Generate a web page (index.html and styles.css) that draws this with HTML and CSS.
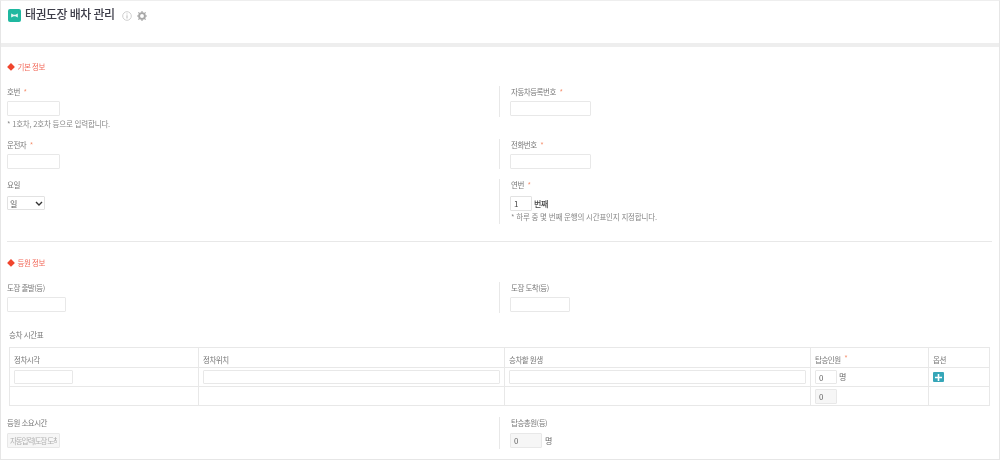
FILE: index.html
```html
<!DOCTYPE html>
<html lang="ko">
<head>
<meta charset="utf-8">
<title>태권도장 배차 관리</title>
<link rel="stylesheet" href="styles.css">
</head>
<body>
<div class="page">
  <header class="head">
    <span class="logo"><svg width="7" height="5" viewBox="0 0 8 6"><path d="M0 0.5 L3 2 H5 L8 0.5 V5.5 L5 4 H3 L0 5.5 Z" fill="#e6f7f3"/></svg></span>
    <h1 class="title">태권도장 배차 관리</h1>
    <svg class="ico-info" width="10" height="10" viewBox="0 0 10 10"><circle cx="5" cy="5" r="4.3" fill="none" stroke="#cfcfcf"/><path d="M5 2.5v.9M5 4.3v3.2" stroke="#bbb" fill="none"/></svg>
    <svg class="ico-gear" width="10" height="10" viewBox="0 0 10 10"><circle cx="5" cy="5" r="2.9" fill="none" stroke="#a8a8a8" stroke-width="1.9"/><path d="M5 0v2M5 8v2M0 5h2M8 5h2M1.4 1.4l1.4 1.4M7.2 7.2l1.4 1.4M1.4 8.6l1.4-1.4M7.2 2.8l1.4-1.4" stroke="#a8a8a8" stroke-width="1.2"/></svg>
  </header>
  <div class="band"></div>

  <main class="content">
    <h2 class="sec sec-a"><span class="dia">◆</span> 기본 정보</h2>

    <div class="row row-1">
      <div class="cell">
        <label class="lab">호번 <i class="req">*</i></label>
        <input class="in w53">
        <p class="hint">* 1호차, 2호차 등으로 입력합니다.</p>
      </div>
      <div class="cell right">
        <label class="lab">자동차등록번호 <i class="req">*</i></label>
        <input class="in w81">
      </div>
    </div>

    <div class="row row-2">
      <div class="cell">
        <label class="lab">운전자 <i class="req">*</i></label>
        <input class="in w53">
      </div>
      <div class="cell right">
        <label class="lab">전화번호 <i class="req">*</i></label>
        <input class="in w81">
      </div>
    </div>

    <div class="row row-3">
      <div class="cell">
        <label class="lab">요일</label>
        <span class="sel">일<svg width="8" height="5" viewBox="0 0 8 5"><path d="M1 1l3 3 3-3" fill="none" stroke="#333" stroke-width="1.4"/></svg></span>
      </div>
      <div class="cell right">
        <label class="lab">연번 <i class="req">*</i></label>
        <div class="inline"><input class="in w22 dark" value="1"><b class="unit">번째</b></div>
        <p class="hint tight">* 하루 중 몇 번째 운행의 시간표인지 지정합니다.</p>
      </div>
    </div>

    <hr class="rule">

    <h2 class="sec sec-b"><span class="dia">◆</span> 등원 정보</h2>

    <div class="row row-4">
      <div class="cell">
        <label class="lab">도장 출발(등)</label>
        <input class="in w59">
      </div>
      <div class="cell right">
        <label class="lab">도장 도착(등)</label>
        <input class="in w60">
      </div>
    </div>

    <h3 class="tbl-title">승차 시간표</h3>

    <table class="tbl">
      <colgroup><col class="c1"><col class="c2"><col class="c3"><col class="c4"><col class="c5"></colgroup>
      <thead>
        <tr><th>정차시각</th><th>정차위치</th><th>승차할 원생</th><th>탑승인원 <i class="req up">*</i></th><th>옵션</th></tr>
      </thead>
      <tbody>
        <tr class="r1">
          <td><input class="in w59"></td>
          <td><input class="in full"></td>
          <td><input class="in full"></td>
          <td><div class="inline"><input class="in w22" value="0"><span class="unit plain">명</span></div></td>
          <td><span class="plus"><svg width="7" height="7" viewBox="0 0 7 7"><path d="M3.5 0v7M0 3.5h7" stroke="#fff" stroke-width="1.6"/></svg></span></td>
        </tr>
        <tr class="r2">
          <td></td><td></td><td></td>
          <td><input class="in w22 ro" value="0" readonly></td>
          <td></td>
        </tr>
      </tbody>
    </table>

    <div class="row row-5">
      <div class="cell">
        <label class="lab">등원 소요시간</label>
        <input class="in w53 ro ph" placeholder="자동입력(도장 도착시간 기준)" readonly>
      </div>
      <div class="cell right">
        <label class="lab">탑승총원(등)</label>
        <div class="inline"><input class="in w32 ro" value="0" readonly><span class="unit plain wide">명</span></div>
      </div>
    </div>
  </main>
</div>
</body>
</html>
```

FILE: styles.css
```css
* { box-sizing: border-box; }
html, body { margin: 0; padding: 0; background: #fff; }
body {
  width: 1000px;
  height: 460px;
  overflow: hidden;
  font-family: "Noto Sans CJK KR", "Noto Sans", sans-serif;
  color: #666;
}
.page {
  width: 1000px;
  height: 460px;
  border: 1px solid #e6e6e6;
  border-top-color: #eee;
  overflow: hidden;
  filter: blur(0.4px);
}
.head {
  height: 42px;
  display: flex;
  align-items: flex-start;
  padding: 6px 0 0 7px;
}
.logo {
  width: 13px;
  height: 13px;
  margin-top: 2px;
  border-radius: 2px;
  background: #1fb8a0;
  display: flex;
  align-items: center;
  justify-content: center;
}
.title {
  margin: 0 0 0 4px;
  font-size: 12px;
  line-height: 14px;
  font-weight: 500;
  color: #3e3e4a;
  letter-spacing: -0.55px;
  white-space: nowrap;
}
.ico-info { margin: 4px 0 0 7px; }
.ico-gear { margin: 4px 0 0 5px; }
.band { height: 4px; background: #eeeeee; }
.content { padding: 0 6px; }

.sec {
  margin: 0;
  font-size: 7.5px;
  line-height: 10px;
  font-weight: 400;
  color: #f2695a;
  letter-spacing: -0.5px;
}
.sec-a { padding-top: 15px; }
.sec-b { padding-top: 16px; }
.dia { color: #f0452d; font-size: 8px; letter-spacing: 0; margin-right: 1px; }

.row { display: grid; grid-template-columns: 492px 1fr; }
.row-1 { margin-top: 14px; height: 43px; }
.row-2 { margin-top: 10px; height: 30px; }
.row-3 { margin-top: 10px; height: 45px; }
.row-4 { margin-top: 14px; height: 32px; }
.row-5 { margin-top: 11px; height: 33px; }

.cell { min-width: 0; }
.right { border-left: 1px solid #e8e8e8; padding-left: 10px; height: 100%; }
.right .lab { padding-left: 1px; }
.row-1 .right { height: 31px; }
.row-4 .right { height: 31px; }
.row-5 .right { height: 32px; }

.lab {
  display: block;
  height: 15px;
  font-size: 7.5px;
  line-height: 11px;
  color: #777;
  letter-spacing: -0.5px;
}
.row-3 .lab { height: 17px; }
.row-5 .lab { height: 16px; }
.req { font-style: normal; color: #f5906f; margin-left: 2px; letter-spacing: 0; }
.up { position: relative; top: -2px; }

.in {
  display: block;
  height: 15px;
  padding: 0 3px;
  border: 1px solid #e8e8e8;
  border-radius: 1px;
  background: #fff;
  font: 8px "Noto Sans CJK KR", "Noto Sans", sans-serif;
  color: #666;
  outline: none;
}
.w22 { width: 22px; }
.w32 { width: 32px; }
.w53 { width: 53px; }
.w59 { width: 59px; }
.w60 { width: 60px; }
.w81 { width: 81px; }
.full { width: 100%; }
.dark { color: #444; border-color: #e2e2e2; }
.ro { background: #f6f6f6; }
.ph { padding: 0 2px; }
.ph::placeholder { color: #b0b0b0; opacity: 1; font-size: 7.5px; letter-spacing: -1.1px; }

.hint {
  margin: 3px 0 0;
  font-size: 7.5px;
  line-height: 10px;
  color: #888;
  letter-spacing: -0.2px;
  white-space: nowrap;
}
.hint.tight { margin-top: 1px; padding-left: 1px; }
.sel {
  width: 38px;
  height: 14px;
  padding: 0 1px 0 2px;
  border: 1px solid #e2e2e2;
  border-radius: 1px;
  display: flex;
  align-items: center;
  justify-content: space-between;
  font-size: 8px;
  color: #555;
}
.inline { display: flex; align-items: center; }
.unit { margin-left: 2px; font-size: 8px; line-height: 12px; color: #444; font-weight: 500; letter-spacing: -0.4px; }
.plain { font-weight: 400; color: #666; }
.wide { margin-left: 3px; }

.rule { border: 0; border-top: 1px solid #e8e8e8; margin: 17px 1px 0 0; }

.tbl-title {
  margin: 15px 0 0 2px;
  height: 18px;
  font-size: 7.5px;
  line-height: 12px;
  font-weight: 400;
  color: #777;
  letter-spacing: -0.4px;
}
.tbl {
  width: 980px;
  margin: 0 0 0 2px;
  border-collapse: collapse;
  table-layout: fixed;
  border: 1px solid #e8e8e8;
}
.c1 { width: 189px; }
.c2 { width: 306px; }
.c3 { width: 306px; }
.c4 { width: 118px; }
.c5 { width: 61px; }
.tbl th, .tbl td {
  border: 1px solid #e8e8e8;
  padding: 0 4px;
  text-align: left;
  font-weight: 400;
  vertical-align: middle;
}
.tbl thead tr { height: 20px; }
.tbl th {
  font-size: 7.5px;
  color: #777;
  letter-spacing: -0.5px;
  padding-top: 4px;
}
.tbl tr.r1 { height: 19px; }
.tbl tr.r2 { height: 19px; }
.tbl .r1 .in { height: 14px; }
.plus {
  display: flex;
  width: 11px;
  height: 10px;
  align-items: center;
  justify-content: center;
  background: #36a6b8;
  border-radius: 1px;
}
```
